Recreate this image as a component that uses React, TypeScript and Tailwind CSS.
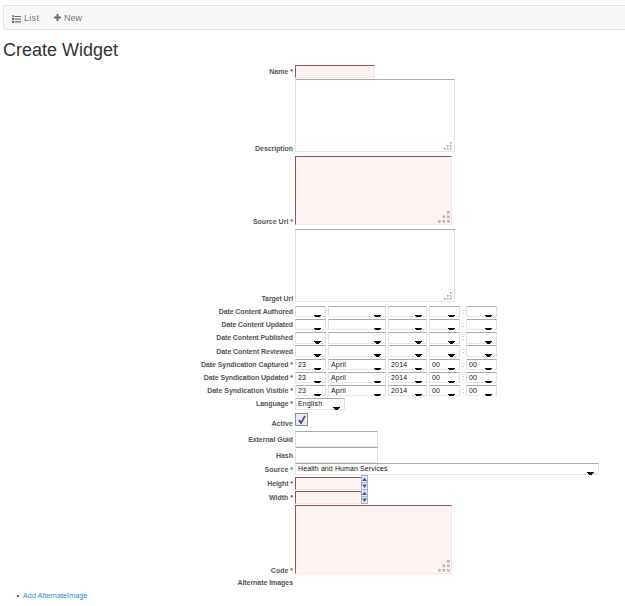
import React from "react";

function Row({ label, row, pad, track = "", children }: { label: string; row: string; pad: string; track?: string; children?: React.ReactNode }) {
  return (
    <div className={`flex items-start ${row}`}>
      <label className={`w-[293px] shrink-0 text-right text-[7px] leading-[8px] font-bold whitespace-nowrap text-[#555] ${pad} ${track}`}>{label}</label>
      <div className="ml-[2px] flex items-start">{children}</div>
    </div>
  );
}

const plain = "border border-t-[#a9a9ae] border-l-[#dfe2e8] border-r-[#dbe2ea] border-b-[#e0e6ee] rounded-[1px] bg-white";
const required = "border border-t-[#8c5a5e] border-l-[#8c5a5e] border-r-[#fde0e0] border-b-[#fde0e0] bg-[#fff2f2]";

function Grip({ large = false }: { large?: boolean }) {
  const dots = [[2, 0], [1, 1], [2, 1], [0, 2], [1, 2], [2, 2]];
  const step = large ? 4.5 : 3;
  const dot = large ? 2.7 : 1.6;
  return (
    <svg className={large ? "h-[12px] w-[12px]" : "h-[8px] w-[8px]"} viewBox={large ? "0 0 12 12" : "0 0 8 8"}>
      {dots.map(([x, y]) => <rect key={`${x}${y}`} x={x * step} y={y * step} width={dot} height={dot} fill={large ? "#c4b6b6" : "#a5a5a5"} />)}
    </svg>
  );
}

function Area({ req = false }: { req?: boolean }) {
  return req ? (
    <div className={`flex h-[69px] w-[157px] items-end justify-end pr-[1px] pb-[1px] ${required}`}><Grip large /></div>
  ) : (
    <div className={`flex h-[73px] w-[160px] items-end justify-end pr-[2px] pb-[1px] ${plain}`}><Grip /></div>
  );
}

function Select({ size, value, ls = "", arrow = "h-[3px]" }: { size: string; value?: string; ls?: string; arrow?: string }) {
  return (
    <div className={`relative pl-[2px] text-[7px] leading-[9px] whitespace-nowrap text-[#111] ${plain} ${size} ${ls}`}>
      {value}
      <svg className={`absolute right-[4px] -bottom-[1px] w-[7px] ${arrow}`} viewBox="0 0 7 3" preserveAspectRatio="xMidYMin slice" shapeRendering="crispEdges">
        <path d="M0 0h7v1h-1v1h-1v1h-3v-1h-1v-1h-1z" fill="#000" />
      </svg>
    </div>
  );
}

function DateFields({ filled = false, tall = false }: { filled?: boolean; tall?: boolean }) {
  const h = tall ? "h-[12px]" : "h-[11px]";
  const arrow = tall ? "h-[3px]" : "h-[2px]";
  return (
    <div className="flex items-start gap-[2px]">
      <Select arrow={arrow} size={`${h} w-[31px]`} value={filled ? "23" : ""} />
      <Select arrow={arrow} size={`${h} w-[58px]`} value={filled ? "April" : ""} ls="tracking-[0.2px]" />
      <Select arrow={arrow} size={`${h} w-[39px]`} value={filled ? "2014" : ""} ls="tracking-[0.2px]" />
      <Select arrow={arrow} size={`${h} w-[31px]`} value={filled ? "00" : ""} />
      <span className="w-[2px] text-center text-[8px] leading-[11px] text-[#777]">:</span>
      <Select arrow={arrow} size={`${h} w-[31px]`} value={filled ? "00" : ""} />
    </div>
  );
}

function Spinner() {
  return (
    <div className="flex">
      <div className={`mt-[2px] h-[13px] w-[66px] !border-r-0 ${required}`} />
      <svg className="h-[15px] w-[7px]" viewBox="0 0 7 15">
        <path d="M0 0h7v15h-7z" fill="#b4b4b8" />
        <path d="M1 1h5v6h-5zM1 8h5v6h-5z" fill="#e6e8f4" />
        <path d="M1 6L3.5 2.5L6 6zM1 9.5L3.5 13L6 9.5z" fill="#465aa8" />
      </svg>
    </div>
  );
}

export default function App() {
  return (
    <div className="h-[606px] w-[625px] overflow-hidden bg-white font-['Liberation_Sans',Arial,sans-serif]">
      <nav className="mt-[5px] ml-[3px] flex h-[25px] items-center rounded-l-[2px] border border-r-0 border-[#e5e5e5] bg-[#f8f8f8] pl-[8px] text-[9px] text-[#777]">
        <svg className="mt-[2px] h-[8px] w-[9px]" viewBox="0 0 9 8" fill="#6c6c6c">
          <path d="M2.5 1h6.5v1H2.5zM2.5 3.5h6.5v1.2H2.5zM2.5 6.3h6.5v1.2H2.5zM0.3 0h1.4v2.4h-1.4zM0 3h2v2H0zM0 5.8h2v2.2H0z" />
        </svg>
        <span className="ml-[3px] w-[30px] pt-[3px] tracking-[0.3px]">List</span>
        <svg className="h-[7px] w-[7px]" viewBox="0 0 7 7" fill="#6c6c6c"><path d="M2.5 0h2v2.5H7v2H4.5V7h-2V4.5H0v-2h2.5z" /></svg>
        <span className="ml-[3px] pt-[3px]">New</span>
      </nav>
      <h1 className="mt-[9px] ml-[3px] h-[26px] text-[18px] leading-[22px] text-[#333]">Create Widget</h1>
      <form>
        <Row label="Name *" row="h-[14px]" pad="pt-[3px]"><div className={`h-[13px] w-[80px] ${required}`} /></Row>
        <Row label="Description" row="h-[77px]" pad="pt-[66px]" track="tracking-[-0.05px]"><Area /></Row>
        <Row label="Source Url *" row="h-[73px]" pad="pt-[62px]"><Area req /></Row>
        <Row label="Target Url" row="h-[77px]" pad="pt-[66px]" track="tracking-[-0.1px]"><Area /></Row>
        <Row label="Date Content Authored" row="h-[13px]" pad="pt-[2px]" track="tracking-[-0.1px]"><DateFields /></Row>
        <Row label="Date Content Updated" row="h-[13px]" pad="pt-[2px]" track="tracking-[-0.1px]"><DateFields /></Row>
        <Row label="Date Content Published" row="h-[13px]" pad="pt-[2px]" track="tracking-[-0.1px]"><DateFields tall /></Row>
        <Row label="Date Content Reviewed" row="h-[14px]" pad="pt-[3px]" track="tracking-[-0.05px]"><DateFields tall /></Row>
        <Row label="Date Syndication Captured *" row="h-[13px]" pad="pt-[2px]" track="tracking-[-0.08px]"><DateFields filled /></Row>
        <Row label="Date Syndication Updated *" row="h-[13px]" pad="pt-[2px]" track="tracking-[-0.08px]"><DateFields filled /></Row>
        <Row label="Date Syndication Visible *" row="h-[13px]" pad="pt-[2px]"><DateFields filled /></Row>
        <Row label="Language *" row="h-[15px]" pad="pt-[2px]" track="tracking-[-0.08px]"><Select size="h-[12px] w-[50px]" value="English" ls="tracking-[0.2px]" /></Row>
        <Row label="Active" row="h-[18px]" pad="pt-[7px]" track="tracking-[0.1px]">
          <div className="flex h-[13px] w-[13px] items-center justify-center border border-[#8e8f8f] bg-[#e9ecf2]">
            <svg className="h-[10px] w-[10px]" viewBox="0 0 10 10" fill="none"><path d="M2 5L4 8L8 1" stroke="#40509a" strokeWidth="1.8" /></svg>
          </div>
        </Row>
        <Row label="External Guid" row="h-[16px]" pad="pt-[5px]" track="tracking-[-0.05px]"><div className={`h-[16px] w-[83px] ${plain}`} /></Row>
        <Row label="Hash" row="h-[16px]" pad="pt-[5px]"><div className={`h-[16px] w-[83px] ${plain}`} /></Row>
        <Row label="Source *" row="h-[12px]" pad="pt-[3px]"><Select size="h-[12px] w-[304px]" value="Health and Human Services" ls="tracking-[0.1px]" /></Row>
        <Row label="Height *" row="h-[14px]" pad="pt-[5px]" track="tracking-[-0.08px]"><Spinner /></Row>
        <Row label="Width *" row="h-[16px]" pad="pt-[5px]"><Spinner /></Row>
        <Row label="Code *" row="h-[69px]" pad="pt-[62px]"><Area req /></Row>
        <Row label="Alternate Images" row="h-[18px]" pad="pt-[5px]" track="tracking-[-0.05px]" />
        <ul className="flex items-center pl-[17px] text-[7px] leading-[8px]">
          <li className="flex items-center gap-[4px]"><span className="h-[2px] w-[2px] rounded-full bg-[#333]" /><a className="tracking-[0.16px] text-[#1688cf]">Add AlternateImage</a></li>
        </ul>
      </form>
    </div>
  );
}
